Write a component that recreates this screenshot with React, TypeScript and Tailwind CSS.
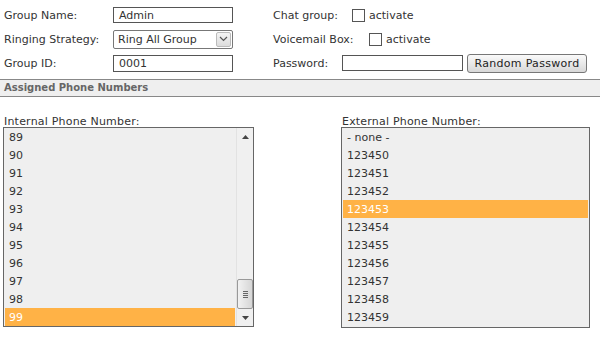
import React from "react";

const internal = ["89", "90", "91", "92", "93", "94", "95", "96", "97", "98", "99"];
const external = ["- none -", "123450", "123451", "123452", "123453", "123454", "123455", "123456", "123457", "123458", "123459"];

const Checkbox = () => (
  <span className="inline-block w-[13px] h-[13px] border border-[#555] bg-white" />
);

export default function App() {
  return (
    <div className="w-[600px] h-[341px] bg-white text-[#333] text-[11px] leading-none font-['DejaVu_Sans',Verdana,sans-serif] overflow-hidden">
      {/* top form */}
      <div className="flex pt-[3px]">
        <div className="w-[273px] pl-[4px]">
          <div className="flex items-center h-[24px]">
            <span className="w-[109px]">Group Name:</span>
            <div className="w-[120px] h-[16px] border border-[#555] flex items-center px-[5px]">Admin</div>
          </div>
          <div className="flex items-center h-[24px]">
            <span className="w-[109px]">Ringing Strategy:</span>
            <div className="w-[120px] h-[19px] border border-[#777] rounded-[2px] flex items-center justify-between pl-[4px] pr-[1px]">
              <span>Ring All Group</span>
              <span className="w-[15px] h-[15px] border border-[#bbb] rounded-[2px] bg-gradient-to-b from-[#f4f4f4] to-[#dcdcdc] flex items-center justify-center">
                <svg width="9" height="6" viewBox="0 0 9 6"><path d="M1 1 L4.5 4.5 L8 1" stroke="#555" strokeWidth="1.2" fill="none" /></svg>
              </span>
            </div>
          </div>
          <div className="flex items-center h-[24px]">
            <span className="w-[109px]">Group ID:</span>
            <div className="w-[120px] h-[17px] border border-[#555] flex items-center px-[5px]">0001</div>
          </div>
        </div>
        <div className="flex-1">
          <div className="flex items-center h-[24px] gap-[4px]">
            <span className="w-[75px]">Chat group:</span>
            <Checkbox />
            <span>activate</span>
          </div>
          <div className="flex items-center h-[24px] gap-[4px]">
            <span className="w-[92px]">Voicemail Box:</span>
            <Checkbox />
            <span>activate</span>
          </div>
          <div className="flex items-center h-[24px]">
            <span className="w-[69px]">Password:</span>
            <div className="w-[121px] h-[16px] border border-[#555]" />
            <button className="ml-[4px] w-[120px] h-[19px] border border-[#777] rounded-[3px] bg-gradient-to-b from-[#fafafa] to-[#d8d8d8] text-[#222] text-[11px] tracking-[0.3px]">
              Random Password
            </button>
          </div>
        </div>
      </div>

      {/* section bar */}
      <div className="mt-[4px] h-[18px] border-y border-[#888] bg-[#efefef] flex items-center px-[4px] font-bold text-[#666] text-[10px]">
        Assigned Phone Numbers
      </div>

      {/* lists */}
      <div className="flex pt-[19px] pl-[3px]">
        <div className="w-[338px]">
          <div className="pl-[1px] h-[11px] text-[#333] tracking-[0.2px]">Internal Phone Number:</div>
          <div className="w-[251px] h-[200px] border border-[#666] bg-[#efefef] flex">
            <div className="flex-1 pl-[1px] pr-[1px]">
              {internal.map((n) => (
                <div
                  key={n}
                  className={`h-[18px] flex items-center pl-[4px] ${n === "99" ? "bg-[#ffb246] text-white" : ""}`}
                >
                  {n}
                </div>
              ))}
            </div>
            {/* scrollbar */}
            <div className="w-[17px] border-l border-[#e2e2e2] bg-[#f0f0f0] flex flex-col">
              <div className="h-[17px] flex items-center justify-center">
                <svg width="7" height="4" viewBox="0 0 7 4"><path d="M0 4 L3.5 0 L7 4 Z" fill="#444" /></svg>
              </div>
              <div className="flex-1" />
              <div className="h-[30px] border border-[#999] rounded-[2px] bg-gradient-to-r from-[#f2f2f2] to-[#d6d6d6] flex flex-col items-center justify-center gap-[1px]">
                <span className="w-[5px] h-px bg-[#666]" />
                <span className="w-[5px] h-px bg-[#666]" />
                <span className="w-[5px] h-px bg-[#666]" />
                <span className="w-[5px] h-px bg-[#666]" />
              </div>
              <div className="h-[17px] flex items-center justify-center">
                <svg width="7" height="4" viewBox="0 0 7 4"><path d="M0 0 L3.5 4 L7 0 Z" fill="#444" /></svg>
              </div>
            </div>
          </div>
        </div>
        <div>
          <div className="pl-[1px] h-[11px] text-[#333] tracking-[0.2px]">External Phone Number:</div>
          <div className="w-[249px] h-[201px] border border-[#666] bg-[#efefef] px-[1px]">
            {external.map((n) => (
              <div
                key={n}
                className={`h-[18px] flex items-center pl-[4px] ${n === "123453" ? "bg-[#ffb246] text-white" : ""}`}
              >
                {n}
              </div>
            ))}
          </div>
        </div>
      </div>
    </div>
  );
}
